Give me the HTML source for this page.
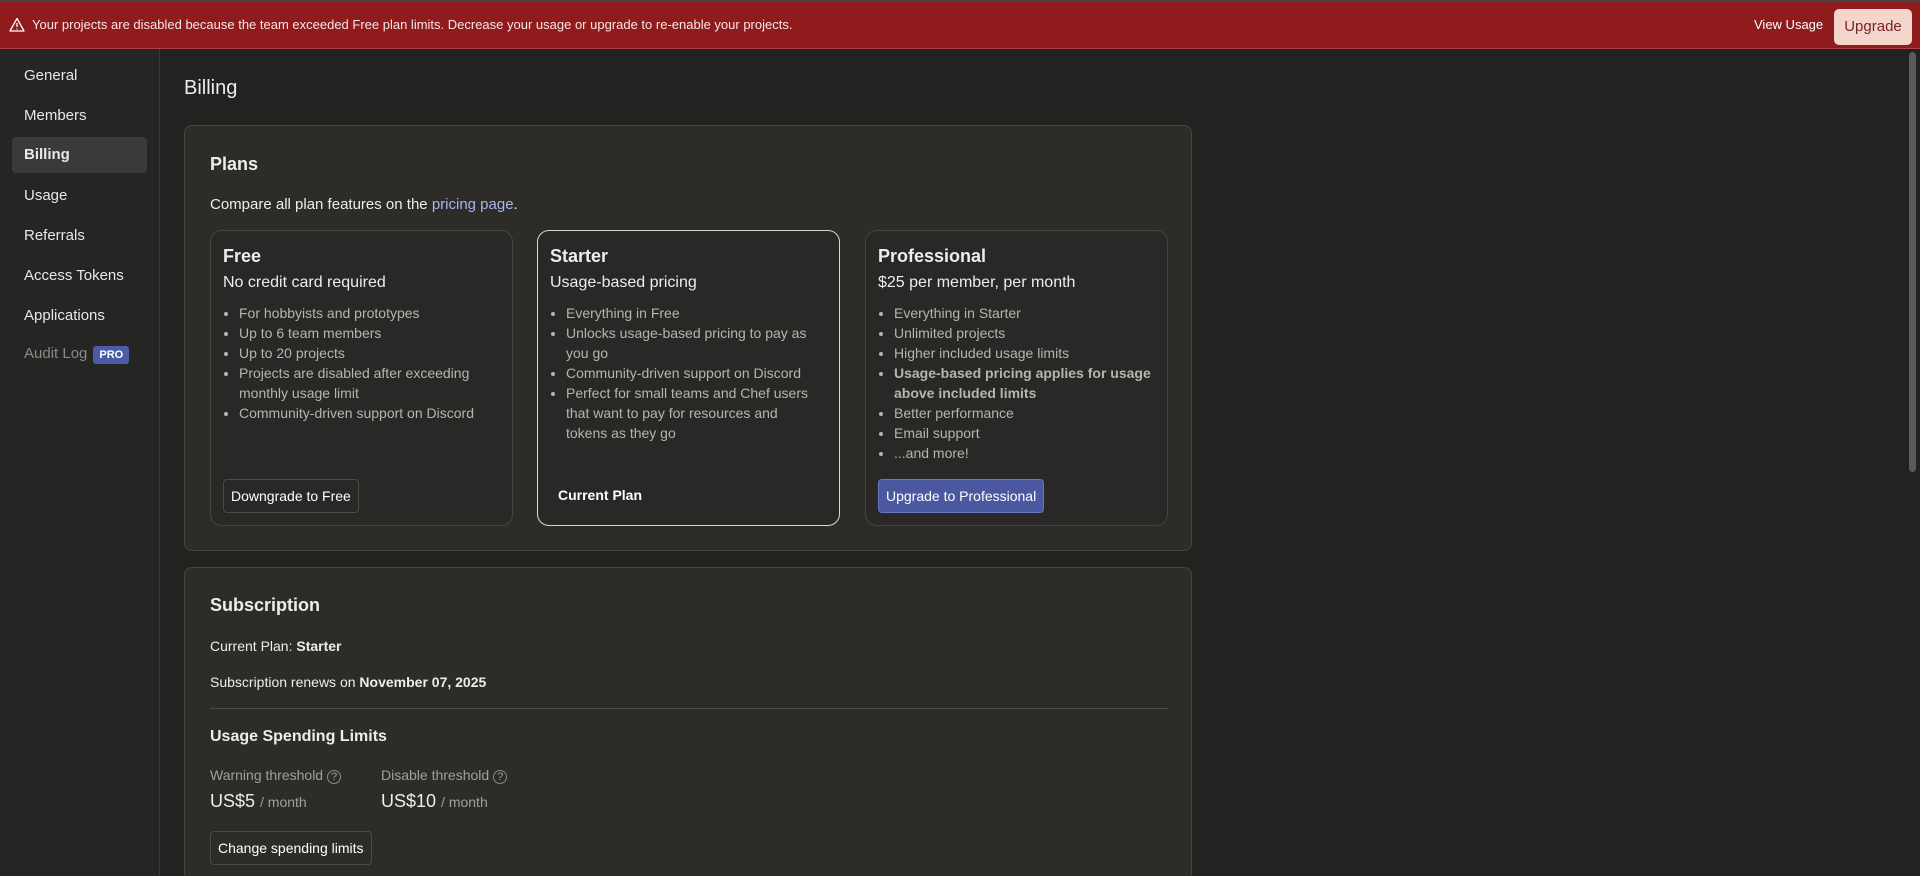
<!DOCTYPE html>
<html><head><meta charset="utf-8"><style>
*{box-sizing:border-box;margin:0;padding:0}
html{width:1920px;height:876px;overflow:hidden}
body{width:1920px;height:876px;overflow:hidden;background:#222221;font-family:"Liberation Sans",sans-serif;color:#ededed;position:relative}
.banner{position:absolute;left:0;top:0;width:1920px;height:49px;background:#8f1b1c;border-top:2px solid #444;border-bottom:1px solid #b04040}
.banner .msg{position:absolute;left:32px;top:15px;font-size:13px;color:#f5e6e6}
.banner .vu{position:absolute;left:1754px;top:15px;font-size:13px;color:#fff}
.banner .up{position:absolute;left:1834px;top:7px;width:78px;height:36px;background:#f3d5cc;border-radius:5px;color:#7a2424;font-size:15px;text-align:center;line-height:36px}
.side{position:absolute;left:0;top:49px;width:160px;height:827px;background:#252524;border-right:1px solid #3a3a3a}
.side div{position:absolute;left:24px;font-size:15px;color:#e8e8e8}
.side .act{left:12px;width:135px;height:36px;background:#3a3a38;border-radius:4px;padding:9px 12px;font-weight:bold}
.pro{display:inline-block;background:#4a5ca8;color:#fff;font-size:11px;font-weight:bold;padding:3px 6px;border-radius:3px;margin-left:6px}
.title{position:absolute;left:184px;top:77px;font-size:20px}
.card{position:absolute;left:184px;width:1008px;background:#2d2c29;border:1px solid #454540;border-radius:8px}
h2{position:absolute;left:25px;font-size:18px;font-weight:bold}
.pc{position:absolute;top:104px;width:303px;height:296px;border:1px solid #45443f;border-radius:12px;background:#292826}
.pc h3{position:absolute;left:12px;top:15px;font-size:18px}
.pc .sub{position:absolute;left:12px;top:43px;font-size:16px}
.pc ul{position:absolute;left:28px;top:72px;right:10px;font-size:14px;line-height:20px;color:#b5b5b0}
.btn{position:absolute;left:12px;top:248px;height:34px;border:1px solid #4a4a46;border-radius:4px;padding:0 7px;line-height:32px;font-size:14px;color:#fff}
a{color:#aab4ee;text-decoration:none}
.t{position:absolute;left:25px;font-size:14px}
</style></head><body>
<div class="banner">
<svg style="position:absolute;left:9px;top:15px" width="16" height="15" viewBox="0 0 16 15"><path d="M8 1.5L15 14H1z" fill="none" stroke="#fff" stroke-width="1.3" stroke-linejoin="round"/><path d="M8 6v4M8 11.5v1" stroke="#fff" stroke-width="1.3"/></svg>
<div class="msg">Your projects are disabled because the team exceeded Free plan limits. Decrease your usage or upgrade to re-enable your projects.</div>
<div class="vu">View Usage</div><div class="up">Upgrade</div>
</div>
<div class="side">
<div style="top:18px">General</div>
<div style="top:58px">Members</div>
<div class="act" style="top:88px">Billing</div>
<div style="top:138px">Usage</div>
<div style="top:178px">Referrals</div>
<div style="top:218px">Access Tokens</div>
<div style="top:258px">Applications</div>
<div style="top:296px;color:#8a8a86">Audit Log<span class="pro">PRO</span></div>
</div>
<div class="title">Billing</div>
<div class="card" style="top:125px;height:426px">
<h2 style="top:28px">Plans</h2>
<div class="t" style="top:70px;font-size:15px">Compare all plan features on the <a>pricing page</a>.</div>
<div class="pc" style="left:25px"><h3>Free</h3><div class="sub">No credit card required</div>
<ul><li>For hobbyists and prototypes</li><li>Up to 6 team members</li><li>Up to 20 projects</li><li>Projects are disabled after exceeding monthly usage limit</li><li>Community-driven support on Discord</li></ul>
<div class="btn">Downgrade to Free</div></div>
<div class="pc" style="left:352px;border-color:#d8d8d2"><h3>Starter</h3><div class="sub">Usage-based pricing</div>
<ul style="right:18px"><li>Everything in Free</li><li>Unlocks usage-based pricing to pay as you go</li><li>Community-driven support on Discord</li><li>Perfect for small teams and Chef users that want to pay for resources and tokens as they go</li></ul>
<div class="btn" style="border:none;font-weight:bold;left:13px">Current Plan</div></div>
<div class="pc" style="left:680px"><h3>Professional</h3><div class="sub">$25 per member, per month</div>
<ul><li>Everything in Starter</li><li>Unlimited projects</li><li>Higher included usage limits</li><li style="font-weight:bold">Usage-based pricing applies for usage above included limits</li><li>Better performance</li><li>Email support</li><li>...and more!</li></ul>
<div class="btn" style="background:#4a58a0;border-color:#6a78c0">Upgrade to Professional</div></div>
</div>
<div class="card" style="top:567px;height:320px">
<h2 style="top:27px">Subscription</h2>
<div class="t" style="top:70px">Current Plan: <b>Starter</b></div>
<div class="t" style="top:106px">Subscription renews on <b>November 07, 2025</b></div>
<div style="position:absolute;left:25px;top:140px;width:958px;height:1px;background:#4a4a46"></div>
<div class="t" style="top:160px;font-size:16px;font-weight:bold">Usage Spending Limits</div>
<div class="t" style="top:199px;color:#a0a09b">Warning threshold <span style="font-size:11px;border:1px solid #888;border-radius:50%;padding:0 3px">?</span></div>
<div class="t" style="top:199px;left:196px;color:#a0a09b">Disable threshold <span style="font-size:11px;border:1px solid #888;border-radius:50%;padding:0 3px">?</span></div>
<div class="t" style="top:223px;font-size:18px">US$5 <span style="font-size:14px;color:#a0a09b">/ month</span></div>
<div class="t" style="top:223px;left:196px;font-size:18px">US$10 <span style="font-size:14px;color:#a0a09b">/ month</span></div>
<div class="btn" style="left:25px;top:263px">Change spending limits</div>
</div>
<div style="position:absolute;left:1909px;top:52px;width:7px;height:420px;background:#5a5a58;border-radius:4px"></div>
</body></html>
